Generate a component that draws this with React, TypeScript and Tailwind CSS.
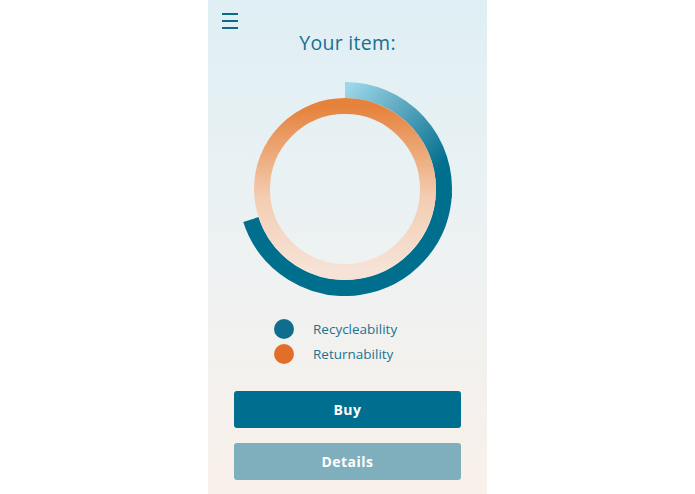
import React from 'react'

const font = { fontFamily: '"Open Sans", "Liberation Sans", sans-serif' }

const cx = 137
const cy = 107

// 角度(時計回り, 12時=0)から座標へ
const pt = (r: number, deg: number) => {
  const a = ((deg - 90) * Math.PI) / 180
  return [cx + r * Math.cos(a), cy + r * Math.sin(a)]
}

function Ring() {
  const rOuter = 99
  const rInner = 83
  const [ax, ay] = pt(rOuter, 0)
  const [bx, by] = pt(rOuter, 95)
  const [b2x, b2y] = pt(rOuter, 92)
  const [ex, ey] = pt(rOuter, 252)
  const top = `M ${ax} ${ay} A ${rOuter} ${rOuter} 0 0 1 ${bx} ${by}`
  const rest = `M ${b2x} ${b2y} A ${rOuter} ${rOuter} 0 0 1 ${ex} ${ey}`

  return (
    <svg width="274" height="214" viewBox="0 0 274 214">
      <defs>
        <linearGradient id="blue" gradientUnits="userSpaceOnUse" x1="140" y1="4" x2="232" y2="88">
          <stop offset="0" stopColor="#9dd7e9" />
          <stop offset="0.45" stopColor="#5aa6bf" />
          <stop offset="1" stopColor="#006e8d" />
        </linearGradient>
        <linearGradient id="orange" x1="0" y1="0" x2="0" y2="1">
          <stop offset="0" stopColor="#e5823c" />
          <stop offset="0.55" stopColor="#f4cdb2" />
          <stop offset="1" stopColor="#f6e3d8" />
        </linearGradient>
      </defs>
      <path d={rest} fill="none" stroke="#006e8d" strokeWidth="16" />
      <path d={top} fill="none" stroke="url(#blue)" strokeWidth="16" />
      <circle cx={cx} cy={cy} r={rInner} fill="none" stroke="url(#orange)" strokeWidth="16" />
    </svg>
  )
}

export default function App() {
  return (
    <div className="w-full h-[494px] bg-white flex justify-center" style={font}>
      <div className="w-[279px] h-full flex flex-col bg-gradient-to-b from-[#dfeff5] via-[#edf2f2] to-[#f9f0ea]">
        {/* ヘッダー */}
        <div className="relative h-[70px]">
          <button className="absolute left-[14px] top-[13px] flex flex-col gap-[5px]">
            <span className="block w-[16px] h-[2px] bg-[#0e6987]" />
            <span className="block w-[16px] h-[2px] bg-[#0e6987]" />
            <span className="block w-[16px] h-[2px] bg-[#0e6987]" />
          </button>
          <h1 className="pt-[29px] text-center text-[19.5px] leading-[28px] text-[#16708f] tracking-[0.3px]">Your item:</h1>
        </div>

        {/* グラフ */}
        <div className="flex justify-center pr-[5px] mt-[12px]">
          <Ring />
        </div>

        {/* 凡例 */}
        <div className="flex flex-col gap-[5px] mt-[23px] pl-[66px]">
          <div className="flex items-center gap-[19px]">
            <span className="w-[20px] h-[20px] rounded-full bg-[#0f6e8e]" />
            <span className="text-[13.5px] text-[#1b7392]">Recycleability</span>
          </div>
          <div className="flex items-center gap-[19px]">
            <span className="w-[20px] h-[20px] rounded-full bg-[#e26f29]" />
            <span className="text-[13.5px] text-[#1b7392]">Returnability</span>
          </div>
        </div>

        {/* ボタン */}
        <div className="flex flex-col gap-[15px] px-[26px] mt-[26px]">
          <button className="h-[37px] rounded-[3px] bg-[#006e8e] text-white text-[14px] font-bold tracking-[0.5px]">Buy</button>
          <button className="h-[37px] rounded-[3px] bg-[#7fafbd] text-white text-[14px] font-bold tracking-[0.5px]">Details</button>
        </div>
      </div>
    </div>
  )
}
